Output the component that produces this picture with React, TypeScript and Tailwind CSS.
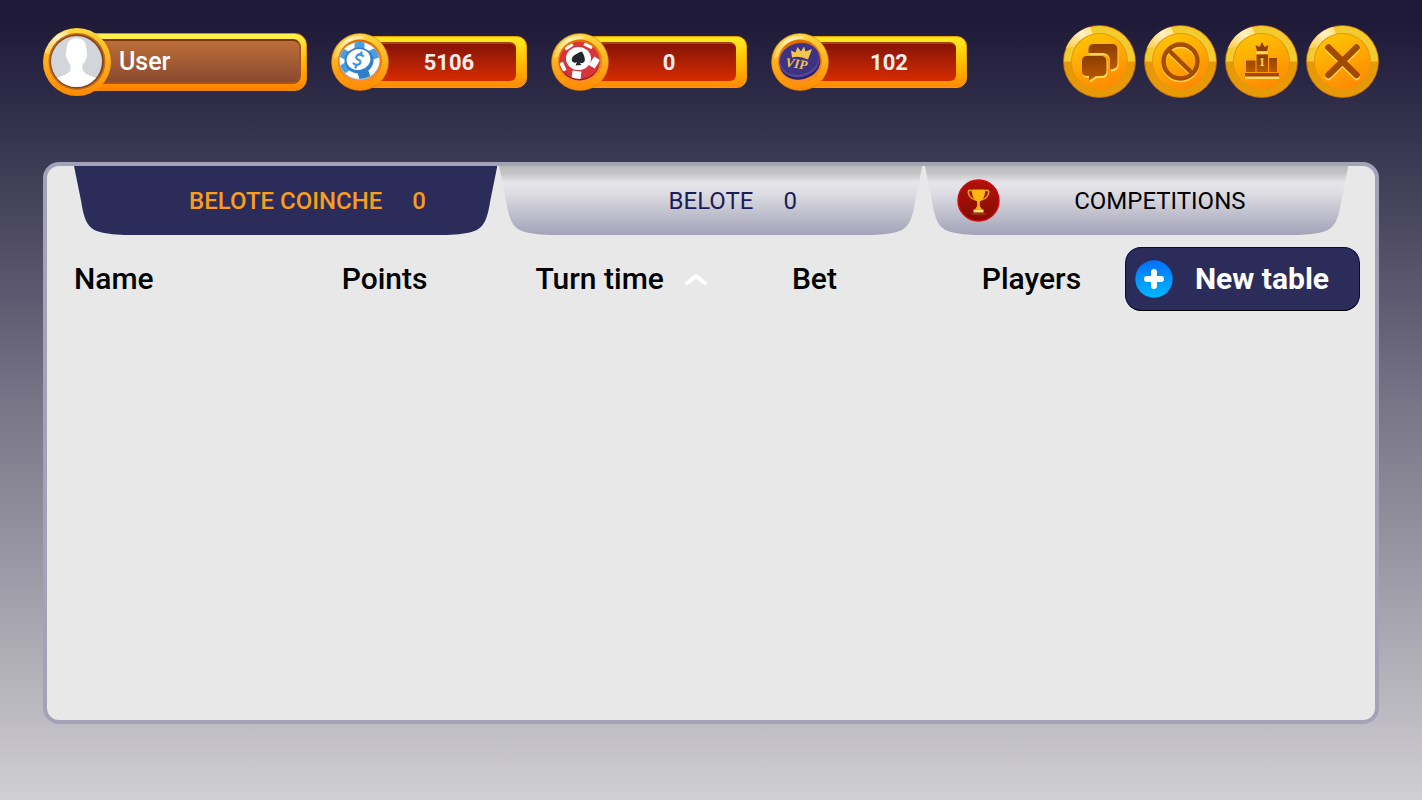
import React from 'react';

const balances = [
  { label: 'Chips', value: '5106', icon: <DollarChip /> },
  { label: 'Tokens', value: '0', icon: <SpadeChip /> },
  { label: 'VIP points', value: '102', icon: <VipChip /> },
];

const actions = [
  { label: 'Chat', icon: <ChatGlyph /> },
  { label: 'Blocked players', icon: <BlockGlyph /> },
  { label: 'Leaderboard', icon: <PodiumGlyph /> },
  { label: 'Close', icon: <CloseGlyph /> },
];

// Gradients shared by all the drawings below
function Gradients() {
  return (
    <svg className="absolute h-0 w-0" aria-hidden="true">
      <defs>
        <linearGradient id="ring" x1="0" y1="0" x2="0" y2="1">
          <stop offset="0" stopColor="#ffd83a" />
          <stop offset="0.5" stopColor="#ffae1c" />
          <stop offset="1" stopColor="#ff8a00" />
        </linearGradient>
        <linearGradient id="shine" x1="0" y1="0.6" x2="0.9" y2="0.1">
          <stop offset="0" stopColor="#ffd35c" />
          <stop offset="0.6" stopColor="#fff2c4" />
          <stop offset="1" stopColor="#ffe58a" />
        </linearGradient>
        <linearGradient id="well" x1="0" y1="0" x2="0" y2="1">
          <stop offset="0" stopColor="#e06c00" />
          <stop offset="1" stopColor="#ff9020" />
        </linearGradient>
        <linearGradient id="face" x1="0.3" y1="0" x2="0.7" y2="1">
          <stop offset="0" stopColor="#ffc400" />
          <stop offset="1" stopColor="#ff8800" />
        </linearGradient>
        <linearGradient id="engraved" x1="0" y1="0" x2="0" y2="1">
          <stop offset="0" stopColor="#8e3d00" />
          <stop offset="1" stopColor="#b85a00" />
        </linearGradient>
        <linearGradient id="tabIdle" x1="0" y1="0" x2="0" y2="1">
          <stop offset="0" stopColor="#b9b9b9" />
          <stop offset="0.1" stopColor="#c3c3c4" />
          <stop offset="0.24" stopColor="#e6e6ea" />
          <stop offset="0.4" stopColor="#dcdce2" />
          <stop offset="1" stopColor="#a3a2b8" />
        </linearGradient>
        <linearGradient id="trophyDisc" x1="0" y1="0" x2="0" y2="1">
          <stop offset="0" stopColor="#b01208" />
          <stop offset="1" stopColor="#860c04" />
        </linearGradient>
        <clipPath id="chipClip">
          <ellipse cx="28.5" cy="27.5" rx="20" ry="18.5" />
        </clipPath>
      </defs>
    </svg>
  );
}

function DollarChip() {
  return (
    <g>
      <ellipse cx="28.5" cy="28.5" rx="20" ry="18.5" fill="#9dbbe0" />
      <ellipse cx="28.5" cy="27.5" rx="20" ry="18.5" fill="#fff" />
      <g fill="#4a9de2" clipPath="url(#chipClip)">
        <rect x="23.5" y="8" width="10" height="9" />
        <rect x="38.5" y="16" width="12" height="10" transform="rotate(-22 43 21)" />
        <rect x="27.5" y="36" width="11" height="13" transform="rotate(-18 33 42)" fill="#2f7fc8" />
        <rect x="8" y="31" width="11" height="9" transform="rotate(-35 13 35)" />
        <rect x="7" y="16" width="10" height="9" transform="rotate(28 12 20)" />
      </g>
      <ellipse cx="28" cy="27.5" rx="14.5" ry="13" fill="#2f7fca" />
      <ellipse cx="27.5" cy="26.5" rx="12" ry="10.5" fill="#fff" transform="rotate(-12 27.5 26.5)" />
      <path
        d="M32 23 Q29 19.8 26 22.5 Q24 25.5 27 26.5 Q31 28 28.5 31 Q25.5 33 22.5 30.5 M30.5 19.5 L29.5 22 M25.5 32 L24.5 34.5"
        fill="none"
        stroke="#3f93dc"
        strokeWidth="2.2"
        strokeLinecap="round"
      />
    </g>
  );
}

function SpadeChip() {
  return (
    <g>
      <ellipse cx="28.5" cy="29" rx="20" ry="18.5" fill="#8f1f26" />
      <ellipse cx="28.5" cy="27.5" rx="20" ry="18.5" fill="#d8353a" />
      <g fill="#fff" clipPath="url(#chipClip)">
        <rect x="13" y="10.5" width="9" height="5" transform="rotate(-32 17.5 13)" />
        <rect x="33" y="9.5" width="9" height="5" transform="rotate(25 37.5 12)" />
        <rect x="38.5" y="26" width="10" height="7" transform="rotate(-58 43.5 29.5)" />
        <rect x="21" y="38" width="9" height="10" transform="rotate(6 25.5 42)" />
        <rect x="8" y="29.5" width="6" height="9" transform="rotate(-24 11 34)" />
      </g>
      <ellipse cx="27.5" cy="25.5" rx="12.5" ry="11.5" fill="#fff" />
      <path
        d="M31 18.5 Q24.5 20.5 21.5 24 Q19.8 27 21.8 29 Q23.8 30.6 26 29 L24.5 32.5 L30.5 32 L28.5 29.5 Q31.5 31.3 33.5 28.5 Q34.8 25 31 18.5 Z"
        fill="#23262e"
      />
    </g>
  );
}

function VipChip() {
  return (
    <g>
      <ellipse cx="29" cy="29.5" rx="20.5" ry="17" transform="rotate(-14 29 29.5)" fill="#2c2464" />
      <ellipse cx="28.5" cy="27" rx="20.5" ry="17" transform="rotate(-14 28.5 27)" fill="#56469b" />
      <ellipse cx="28.5" cy="26" rx="19.5" ry="15.5" transform="rotate(-14 28.5 26)" fill="#3e3282" />
      <path
        d="M21 24.5 L20 17.5 L24.5 19.5 L26.5 14 L30 18.5 L33 13.5 L34.5 18.5 L41 16 L37 26.5 Q29 22.5 21 24.5 Z"
        fill="#f2c64e"
      />
      <text
        x="25.5"
        y="35"
        transform="rotate(8 25 30)"
        textAnchor="middle"
        className="fill-[#f2c64e] font-['Liberation_Serif',serif] text-[13px] font-bold italic"
      >
        VIP
      </text>
    </g>
  );
}

function ChatGlyph() {
  const back = 'M31 19 H49 Q54.5 19 54.5 24.5 V38 Q54.5 44 47 44.5 V36 Q47 28 39 28 H25.5 V24.5 Q25.5 19 31 19 Z';
  const front = 'M24 31 H38 Q43.5 31 43.5 36.5 V45.5 Q43.5 51 38 51 H33 L26 55.5 V51 H24 Q19 51 19 46 V36 Q19 31 24 31 Z';
  return (
    <g>
      <path d={back} fill="#ffd65c" transform="translate(1 2)" />
      <path d={back} fill="url(#engraved)" />
      <path d={front} fill="#ffd65c" transform="translate(1 2)" />
      <path d={front} fill="url(#engraved)" />
    </g>
  );
}

function BlockGlyph() {
  return (
    <g fill="none" strokeWidth="4.5">
      <g stroke="#ffd65c" transform="translate(0 1.5)">
        <circle cx="36.5" cy="36.5" r="17" />
        <path d="M24.5 25 L48.5 48.5" />
      </g>
      <g stroke="#a44c00">
        <circle cx="36.5" cy="36.5" r="17" />
        <path d="M24.5 25 L48.5 48.5" />
      </g>
    </g>
  );
}

function PodiumGlyph() {
  return (
    <g>
      <path d="M20 50 H54 V54 H20 Z M31 26.5 H43 V29 H31 Z" fill="#ffd65c" />
      <path d="M21 35.5 H30.5 V47 H21 Z M31.5 29.5 H43 V47 H31.5 Z M44 33 H52 V47 H44 Z" fill="url(#engraved)" />
      <path d="M20 48 H54 V51.5 H20 Z" fill="#a34500" />
      <path d="M30.5 20 L34.5 22 L37 17 L39.5 22 L43.5 20 L42 26 H32 Z" fill="#8e3d00" />
      <text
        x="37"
        y="41"
        textAnchor="middle"
        className="fill-[#ffd65c] font-['Liberation_Serif',serif] text-[12px] font-bold"
      >
        1
      </text>
    </g>
  );
}

function CloseGlyph() {
  return (
    <g fill="none" strokeWidth="6.5" strokeLinecap="round">
      <path d="M22.5 22.5 L50.5 50 M50.5 22.5 L22.5 50" stroke="#ffd65c" transform="translate(0 2)" />
      <path d="M22.5 22.5 L50.5 50 M50.5 22.5 L22.5 50" stroke="#a34a00" />
    </g>
  );
}

function CoinMedal({ children }: { children: React.ReactNode }) {
  return (
    <svg viewBox="0 0 58 58" className="relative size-[58px] shrink-0" aria-hidden="true">
      <circle cx="29" cy="29" r="28.5" fill="url(#ring)" stroke="#c97a1c" strokeWidth="0.6" />
      <path d="M3 25 A26.5 26.5 0 0 1 22 3.5 L34 2.8 L31 6 A22.5 22.5 0 0 0 7.5 24 Z" fill="url(#shine)" />
      <circle cx="29" cy="28.5" r="22" fill="url(#well)" />
      {children}
    </svg>
  );
}

function UserMedal() {
  return (
    <svg viewBox="0 0 68 70" className="relative h-[70px] w-[68px] shrink-0" aria-hidden="true">
      <circle cx="34" cy="35" r="34" fill="url(#ring)" />
      <path d="M1.5 26 A33.5 33.5 0 0 1 25 3 L24 9.5 A27 27 0 0 0 8 27 Z" fill="url(#shine)" />
      <circle cx="34" cy="34.5" r="28.5" fill="#c56a18" />
      <circle cx="34" cy="34.5" r="27" fill="#84451f" />
      <circle cx="33.5" cy="34.5" r="25.5" fill="#d2d6da" />
      <path
        d="M33.5 11 Q43.5 11.5 43.5 22 V25 Q45 27 43.5 31 Q42 35 39.5 37.5 V43 Q41 46.5 48 49 Q51 50 53 51 A25.5 25.5 0 0 1 14 51 Q16 50 19 49 Q26 46.5 27.5 43 V37.5 Q25 35 23.5 31 Q22 27 23.5 25 V22 Q23.5 11.5 33.5 11 Z"
        fill="#fff"
      />
    </svg>
  );
}

function UserBadge() {
  return (
    <div className="flex items-center">
      <UserMedal />
      <div className="-ml-8 h-[58px] w-[228px] rounded-xl border border-[#e88a10] bg-linear-to-b from-[#fff04a] from-5% via-[#ffc400] via-40% to-[#ff8000] pt-[5px] pr-[5px] pb-[6px]">
        <div className="flex h-full items-center rounded-lg border-2 border-[#a4541c] border-t-[#7a3414] bg-linear-to-b from-[#bd6e37] to-[#8a4a30] pt-px pl-[37px] text-[25px] font-medium text-white">
          User
        </div>
      </div>
    </div>
  );
}

function BalanceBadge({ label, value, icon }: { label: string; value: string; icon: React.ReactNode }) {
  return (
    <div className="flex items-center" title={label}>
      <CoinMedal>{icon}</CoinMedal>
      <div className="-ml-7 h-[52px] w-[166px] rounded-[10px] border border-[#f0a000] bg-linear-to-b from-[#ffe81f] from-5% via-[#ffbe00] via-50% to-[#ff8a00] pt-[5px] pr-[10px] pb-[6px]">
        <div className="flex h-full items-center justify-center rounded-md border-t-2 border-[#a84400] bg-linear-to-b from-[#871406] to-[#d82c00] pl-5 text-[22px] font-bold text-[#f3eeee]">
          {value}
        </div>
      </div>
    </div>
  );
}

function ActionButton({ label, icon }: { label: string; icon: React.ReactNode }) {
  return (
    <button type="button" aria-label={label} className="size-[73px] cursor-pointer rounded-full">
      <svg viewBox="0 0 73 73" className="size-full" aria-hidden="true">
        <circle cx="36.5" cy="36.5" r="36" fill="#e89a06" stroke="#c46c1c" strokeWidth="0.8" />
        <path d="M1 36.5 A35.5 35.5 0 0 1 72 36.5 Z" fill="#f2cb2e" />
        <path d="M3 23 A36 36 0 0 1 27 2 L30 9 A29 29 0 0 0 11 22 Z" fill="url(#shine)" />
        <circle cx="36.5" cy="36.5" r="28.5" fill="#e79412" />
        <circle cx="36.5" cy="36.5" r="27.5" fill="url(#face)" />
        {icon}
      </svg>
    </button>
  );
}

function TabShape({ active = false }: { active?: boolean }) {
  return (
    <svg
      viewBox="0 0 424 68"
      preserveAspectRatio="none"
      className="absolute inset-0 -z-10 size-full"
      aria-hidden="true"
    >
      <path
        d="M0 0 L7 34 C10 52 13 62 26 65 C34 67 42 68 56 68 H368 C382 68 390 67 398 65 C411 62 414 52 417 34 L424 0 Z"
        fill={active ? '#2b2c5a' : 'url(#tabIdle)'}
      />
    </svg>
  );
}

function TrophyIcon() {
  return (
    <svg viewBox="0 0 43 43" className="size-[43px]" aria-hidden="true">
      <circle cx="21.5" cy="21.5" r="20.5" fill="url(#trophyDisc)" stroke="#d00a10" strokeWidth="1.4" />
      <path
        d="M15.5 12 Q11 10 11.3 13.5 Q12 19 18.5 21 M27.5 12 Q32 10 31.7 13.5 Q31 19 24.5 21"
        fill="none"
        stroke="#e8a010"
        strokeWidth="1.6"
      />
      <path d="M15 10.5 H28 Q28.5 19.5 22.8 22.5 V27 L25 30.5 H18 L20.2 27 V22.5 Q14.5 19.5 15 10.5 Z" fill="#fbb612" />
      <path d="M16.5 30.5 H26.5 V33.5 H16.5 Z" fill="#ffe07a" />
      <path d="M14.5 34.5 H28.5 V35.5 H14.5 Z" fill="#a8590c" />
    </svg>
  );
}

export default function App() {
  return (
    <div className="flex min-h-screen flex-col bg-linear-to-b from-[#1d1937] from-2% via-[#777486] via-50% to-[#d0cfd2] px-[43px] pt-[25px] pb-[76px] font-[Roboto,sans-serif]">
      <Gradients />

      {/* Player and balances */}
      <header className="flex items-center justify-between">
        <div className="flex items-center gap-6">
          <UserBadge />
          {balances.map((balance) => (
            <BalanceBadge key={balance.label} {...balance} />
          ))}
        </div>
        <nav className="flex gap-2">
          {actions.map((action) => (
            <ActionButton key={action.label} {...action} />
          ))}
        </nav>
      </header>

      {/* Lobby */}
      <main className="mt-16 flex-1 rounded-2xl border-4 border-[#a3a2b8] bg-[#e8e8e8] pr-[15px] pl-[27px]">
        <div role="tablist" className="grid grid-cols-3 gap-[2px] pr-3 text-2xl">
          <button
            type="button"
            role="tab"
            aria-selected="true"
            className="relative isolate grid h-[69px] grid-cols-[1fr_auto_1fr] items-center font-medium text-[#f99d1c]"
          >
            <TabShape active />
            <span className="col-start-2">BELOTE COINCHE</span>
            <span className="pl-[30px] text-left">0</span>
          </button>
          <button
            type="button"
            role="tab"
            aria-selected="false"
            className="relative isolate grid h-[69px] grid-cols-[1fr_auto_1fr] items-center text-[#1c1c58]"
          >
            <TabShape />
            <span className="col-start-2">BELOTE</span>
            <span className="pl-[30px] text-left">0</span>
          </button>
          <button
            type="button"
            role="tab"
            aria-selected="false"
            className="relative isolate flex h-[69px] items-center pr-7 pl-8 text-black"
          >
            <TabShape />
            <TrophyIcon />
            <span className="flex-1 text-center">COMPETITIONS</span>
          </button>
        </div>

        <table className="mt-3 w-full table-fixed text-[30px] leading-9 text-black">
          <thead>
            <tr>
              <th scope="col" className="w-[16%] text-left font-medium">Name</th>
              <th scope="col" className="w-[16%] pl-1 text-center font-medium">Points</th>
              <th scope="col" aria-sort="ascending" className="w-[18%] pl-[50px] text-left font-medium">
                <button type="button" className="flex items-center gap-5 whitespace-nowrap">
                  Turn time
                  <svg viewBox="0 0 24 14" className="h-[14px] w-6" aria-hidden="true">
                    <path
                      d="M3 11 L12 4 L21 11"
                      fill="none"
                      stroke="#fff"
                      strokeWidth="4"
                      strokeLinecap="round"
                      strokeLinejoin="round"
                    />
                  </svg>
                </button>
              </th>
              <th scope="col" className="w-[15%] pl-[2px] text-center font-medium">Bet</th>
              <th scope="col" className="pl-7 text-center font-medium">Players</th>
              <th scope="col" className="w-[235px] font-bold">
                <button
                  type="button"
                  className="flex h-16 w-full cursor-pointer items-center rounded-2xl border border-[#08084a] border-b-black bg-[#2b2c5a] pl-[9px] text-white"
                >
                  <svg viewBox="0 0 38 38" className="size-[38px]" aria-hidden="true">
                    <defs>
                      <linearGradient id="plusDisc" x1="0" y1="0" x2="0" y2="1">
                        <stop offset="0" stopColor="#0070ff" />
                        <stop offset="1" stopColor="#00b8ff" />
                      </linearGradient>
                    </defs>
                    <circle cx="19" cy="19" r="18.7" fill="url(#plusDisc)" />
                    <path d="M19 12 V26 M12 19 H26" stroke="#fff" strokeWidth="6" strokeLinecap="round" />
                  </svg>
                  <span className="flex-1 pr-2 text-center">New table</span>
                </button>
              </th>
            </tr>
          </thead>
          <tbody />
        </table>
      </main>
    </div>
  );
}
